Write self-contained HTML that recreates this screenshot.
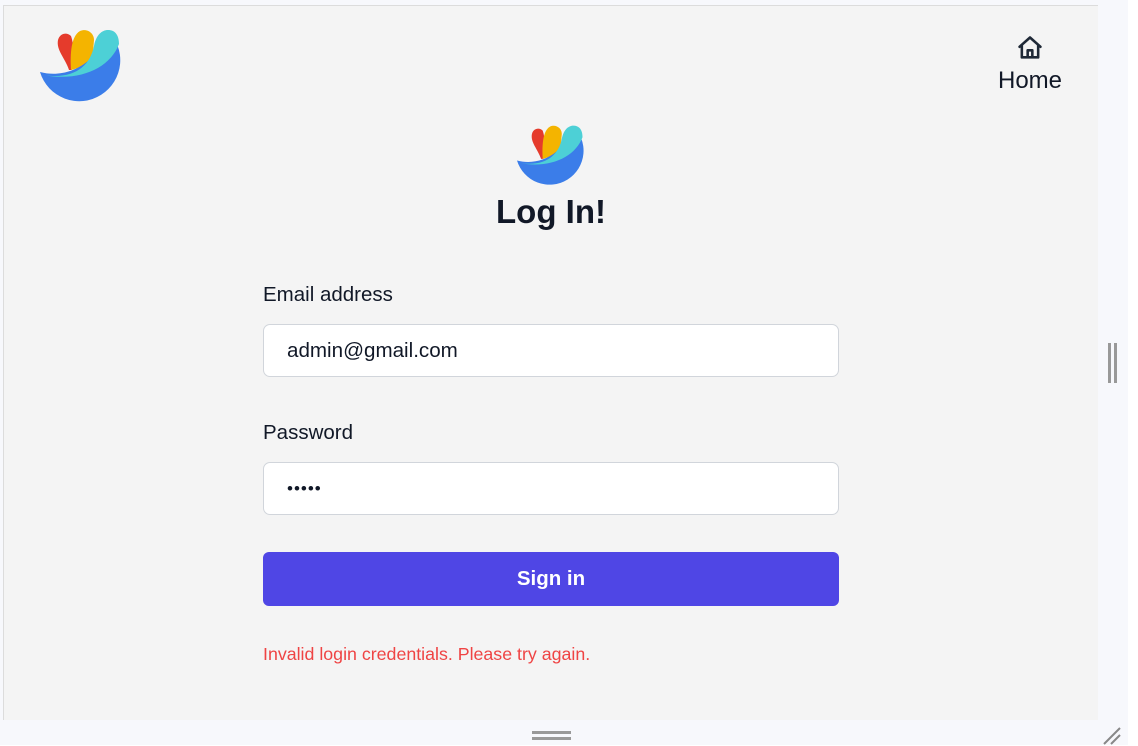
<!DOCTYPE html>
<html><head><meta charset="utf-8"><style>
*{margin:0;padding:0;box-sizing:border-box}
body{width:1138px;height:745px;background:#fff;font-family:"Liberation Sans",Arial,sans-serif;position:relative;overflow:hidden;color:#111827}
.outer{position:absolute;left:0;top:0;width:1128px;height:745px;background:#f7f8fc}
.panel{position:absolute;left:3px;top:5px;width:1095px;height:715px;background:#f4f4f4;border-top:1px solid #dcdcdc;border-left:1px solid #dcdcdc}
.abs{position:absolute}
.label{position:absolute;left:263px;font-size:20.5px;color:#111827}
.input{position:absolute;left:263px;width:576px;height:53px;background:#fff;border:1px solid #d1d5db;border-radius:7px;font-size:20.6px;padding-left:23px;line-height:51px;color:#111827}
.btn{position:absolute;left:263px;top:552px;width:576px;height:54px;background:#4f46e5;border-radius:6px;color:#fff;font-weight:bold;font-size:20.5px;text-align:center;line-height:54px}
</style></head><body>
<div class="outer"></div>
<div class="panel"></div>
<svg width="0" height="0" style="position:absolute"><defs>
<g id="logo">
<path d="M29,40 C25,28 16,20 18,10 C20,3 27,2 31,6 C34,14 34,28 32,40 Z" fill="#e53b2c"/>
<path d="M31,40 C30,24 31,6 40,1 C47,-2 54,3 54,10 L52,34 Z" fill="#f4b400"/>
<path d="M0,42 A41,41 0 1 0 67,0 C60,30 30,50 0,42 Z" fill="#3b7de9"/>
<path d="M3,45 C34,50 50,36 54,16 C56,5 62,0 68,0 C75,0 79,5 79,14 C70,38 40,52 3,45 Z" fill="#4dd0d6"/>
</g></defs></svg>
<svg class="abs" style="left:40px;top:30px" width="82" height="72" viewBox="0 0 82 72" overflow="visible"><use href="#logo"/></svg>
<svg class="abs" style="left:517px;top:125px" width="68" height="61" viewBox="0 0 82 72" overflow="visible"><use href="#logo"/></svg>
<svg class="abs" style="left:1016px;top:34px" width="28" height="28" viewBox="0 0 24 24" fill="none" stroke="#1f2937" stroke-width="2.2" stroke-linejoin="round" stroke-linecap="round"><path d="M3 11 L12 3 L21 11 M5 9.5 V20 H19 V9.5 M10 20 V14 H14 V20"/></svg>
<div class="abs" style="left:998px;top:67px;font-size:24px;color:#111827">Home</div>
<div class="abs" style="left:0;width:1102px;top:193px;text-align:center;font-size:33px;font-weight:bold;color:#111827">Log In!</div>
<div class="label" style="top:283px">Email address</div>
<div class="input" style="top:324px">admin@gmail.com</div>
<div class="label" style="top:421px">Password</div>
<div class="input" style="top:462px;letter-spacing:1px;font-size:17px">•••••</div>
<div class="btn">Sign in</div>
<div class="abs" style="left:263px;top:644px;font-size:17.8px;color:#ef4444">Invalid login credentials. Please try again.</div>
<div class="abs" style="left:1108px;top:343px;width:3px;height:40px;background:#999"></div>
<div class="abs" style="left:1114px;top:343px;width:3px;height:40px;background:#999"></div>
<div class="abs" style="left:532px;top:731px;width:39px;height:3px;background:#999"></div>
<div class="abs" style="left:532px;top:737px;width:39px;height:3px;background:#999"></div>
<svg class="abs" style="left:1102px;top:726px" width="20" height="20" viewBox="0 0 20 20" stroke="#888" stroke-width="2"><path d="M2 18 L18 2 M9 18 L18 9"/></svg>
</body></html>
